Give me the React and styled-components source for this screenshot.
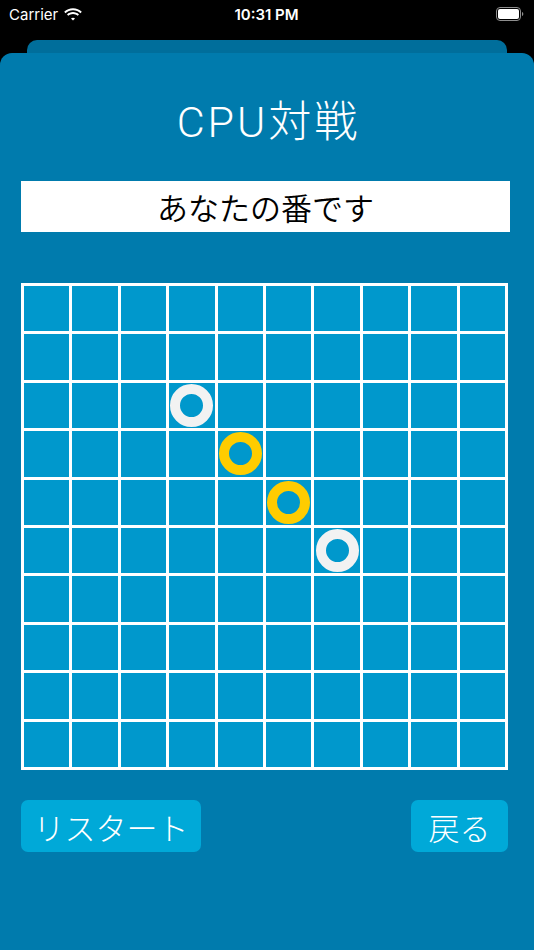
import styled, { createGlobalStyle } from 'styled-components'

const GlobalStyle = createGlobalStyle`
    html, body {
        margin: 0;
        padding: 0;
        background: #000;
    }
    body {
        font-family: "Noto Sans CJK JP", "Noto Sans", sans-serif;
    }
`;

const Screen = styled.div`
    width: 534px;
    height: 950px;
    background: #000;
    display: flex;
    flex-direction: column;
    overflow: hidden;
`;

const StatusBar = styled.div`
    height: 40px;
    display: flex;
    align-items: center;
    justify-content: space-between;
    padding: 0 10px 12px 9px;
    box-sizing: border-box;
    color: #fff;
    font-family: Inter, "Liberation Sans", sans-serif;
    font-size: 15px;
`;

const StatusSide = styled.div`
    width: 110px;
    display: flex;
    align-items: center;
    gap: 6px;
    justify-content: ${p => (p.right ? 'flex-end' : 'flex-start')};
`;

const Time = styled.div`
    font-weight: 600;
`;

const BackCard = styled.div`
    height: 13px;
    margin: 0 27px;
    background: #006e9b;
    border-radius: 10px 10px 0 0;
`;

const Card = styled.main`
    flex: 1;
    background: #007bad;
    border-radius: 12px 12px 0 0;
    padding: 47px 21px 0;
    display: flex;
    flex-direction: column;
`;

const Title = styled.h1`
    margin: 0;
    text-align: center;
    color: #fff;
    font-family: Roboto, "Noto Sans CJK JP", sans-serif;
    font-size: 43px;
    font-weight: 300;
    line-height: 45px;
    letter-spacing: 3px;
    text-indent: 3px;
`;

const TurnBar = styled.div`
    margin-top: 36px;
    margin-right: 3px;
    height: 51px;
    background: #fff;
    color: #000;
    font-size: 31px;
    font-weight: 350;
    display: flex;
    align-items: center;
    justify-content: center;
`;

const Board = styled.div`
    margin-top: 51px;
    width: 487px;
    height: 487px;
    box-sizing: border-box;
    background: #fff;
    padding: 3px;
    display: grid;
    grid-template-columns: repeat(10, 1fr);
    grid-template-rows: repeat(10, 1fr);
    gap: 3px;
`;

const Cell = styled.div`
    background: #0098cc;
    display: flex;
    align-items: center;
    justify-content: center;
`;

const Ring = styled.div`
    width: 43px;
    height: 43px;
    box-sizing: border-box;
    border-radius: 50%;
    border: 10.5px solid ${p => (p.color === 'yellow' ? '#ffcc00' : '#f2f2f2')};
    flex-shrink: 0;
`;

const Buttons = styled.div`
    margin-top: 30px;
    width: 487px;
    display: flex;
    justify-content: space-between;
`;

const Button = styled.button`
    width: ${p => p.width}px;
    height: 52px;
    padding: 0;
    border: none;
    border-radius: 7px;
    background: #00a9d8;
    color: #fff;
    font-family: "Noto Sans CJK JP", sans-serif;
    font-size: 31px;
    font-weight: 300;
    cursor: pointer;
`;

const stones = {
    '2-3': 'white',
    '3-4': 'yellow',
    '4-5': 'yellow',
    '5-6': 'white',
};

const Wifi = () => (
    <svg width="18" height="13" viewBox="0 0 18 13">
        <path d="M9 2.2c2.9 0 5.5 1.1 7.5 3l1.3-1.4C15.5 1.6 12.4.3 9 .3S2.5 1.6.2 3.8l1.3 1.4c2-1.9 4.6-3 7.5-3z" fill="#fff" />
        <path d="M9 6c1.8 0 3.4.7 4.7 1.8l1.3-1.4C13.4 5 11.3 4.1 9 4.1S4.6 5 3 6.4l1.3 1.4C5.6 6.7 7.2 6 9 6z" fill="#fff" />
        <path d="M9 9.7c.8 0 1.5.3 2 .8L9 12.6 7 10.5c.5-.5 1.2-.8 2-.8z" fill="#fff" />
    </svg>
);

const Battery = () => (
    <svg width="28" height="14" viewBox="0 0 28 14">
        <rect x="0.5" y="0.5" width="24" height="13" rx="3.5" fill="none" stroke="#8e8e8e" />
        <rect x="2" y="2" width="21" height="10" rx="2" fill="#fff" />
        <path d="M26 5v4c.8-.3 1.3-1.1 1.3-2s-.5-1.7-1.3-2z" fill="#8e8e8e" />
    </svg>
);

const App = () => {
    const cells = [];
    for (let r = 0; r < 10; r++) {
        for (let c = 0; c < 10; c++) {
            const stone = stones[`${r}-${c}`];
            cells.push(
                <Cell key={`${r}-${c}`}>
                    {stone && <Ring color={stone} />}
                </Cell>
            );
        }
    }

    return (
        <>
            <GlobalStyle />
            <Screen>
                <StatusBar>
                    <StatusSide>
                        Carrier <Wifi />
                    </StatusSide>
                    <Time>10:31 PM</Time>
                    <StatusSide right>
                        <Battery />
                    </StatusSide>
                </StatusBar>
                <BackCard />
                <Card>
                    <Title>CPU対戦</Title>
                    <TurnBar>あなたの番です</TurnBar>
                    <Board>{cells}</Board>
                    <Buttons>
                        <Button width={180}>リスタート</Button>
                        <Button width={97}>戻る</Button>
                    </Buttons>
                </Card>
            </Screen>
        </>
    )
}

export default App
